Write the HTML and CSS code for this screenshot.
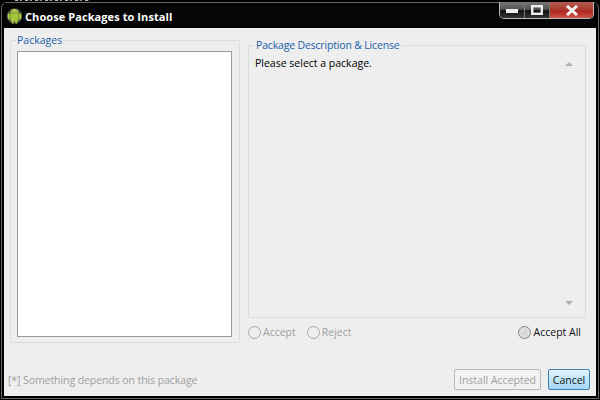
FILE: index.html
```html
<!DOCTYPE html>
<html lang="en">
<head>
<meta charset="utf-8">
<title>Choose Packages to Install</title>
<link rel="stylesheet" href="styles.css">
</head>
<body>
<div class="specks"></div>
<div class="window">
  <header class="titlebar">
    <svg class="app-icon" width="15" height="16" viewBox="0 0 16 18">
      <circle cx="8" cy="9" r="8.6" fill="#e8efd0" opacity=".3"/>
      <rect x="0.4" y="6" width="2.6" height="7" rx="1.3" fill="#a4c639"/>
      <rect x="13" y="6" width="2.6" height="7" rx="1.3" fill="#a4c639"/>
      <path d="M3.4 5.4a4.6 4.4 0 0 1 9.2 0z" fill="#b5d34a"/>
      <path d="M3.4 6h9.2v7.6a1.2 1.2 0 0 1-1.2 1.2H4.6a1.2 1.2 0 0 1-1.2-1.2z" fill="#a4c639"/>
      <rect x="4.8" y="14" width="2.4" height="3.6" rx="1.2" fill="#a4c639"/>
      <rect x="8.8" y="14" width="2.4" height="3.6" rx="1.2" fill="#a4c639"/>
      <circle cx="6" cy="3.4" r=".6" fill="#333"/>
      <circle cx="10" cy="3.4" r=".6" fill="#333"/>
    </svg>
    <h1 class="title">Choose Packages to Install</h1>
    <div class="controls">
      <div class="ctl ctl-min"><svg width="12" height="5" viewBox="0 0 12 5"><rect width="12" height="4" y="1" fill="#eee"/></svg></div>
      <div class="ctl ctl-max"><svg width="12" height="10" viewBox="0 0 12 10"><rect x="1.2" y="1.2" width="9.6" height="7.6" fill="none" stroke="#eee" stroke-width="2.4"/></svg></div>
      <div class="ctl ctl-close"><svg width="14" height="11" viewBox="0 0 14 11"><path d="M2 1l10 9M12 1L2 10" stroke="#f4f0ee" stroke-width="3" fill="none"/></svg></div>
    </div>
  </header>
  <main class="client">
    <div class="panes">
      <fieldset class="group group-left">
        <legend class="legend">Packages</legend>
        <div class="list"></div>
      </fieldset>
      <div class="right">
        <fieldset class="group group-right">
          <legend class="legend">Package Description &amp; License</legend>
          <div class="desc">
            <p class="desc-text">Please select a package.</p>
            <div class="scroll">
              <span class="arrow arrow-up"></span>
              <span class="arrow arrow-down"></span>
            </div>
          </div>
        </fieldset>
        <div class="radios">
          <label class="radio disabled"><span class="dot"></span>Accept</label>
          <label class="radio disabled"><span class="dot"></span>Reject</label>
          <label class="radio accept-all"><span class="dot"></span>Accept All</label>
        </div>
      </div>
    </div>
    <footer class="footer">
      <span class="hint">[*] Something depends on this package</span>
      <button class="btn btn-disabled" type="button">Install Accepted</button>
      <button class="btn btn-default" type="button">Cancel</button>
    </footer>
  </main>
</div>
</body>
</html>
```
FILE: styles.css
```css
* { box-sizing: border-box; }
html, body { margin: 0; padding: 0; }
body {
  width: 600px;
  height: 400px;
  background: #000;
  overflow: hidden;
  display: flex;
  flex-direction: column;
  font-family: "Open Sans", "Noto Sans", sans-serif;
  font-size: 10.5px;
}
.specks {
  height: 2px;
  flex: none;
  background: repeating-linear-gradient(90deg, #bbb 0 3px, #222 3px 5px, #999 5px 7px, #000 7px 10px) 15px 0 / 75px 1px no-repeat;
}
.window {
  height: 397px;
  flex: none;
  margin: 0 1px;
  display: flex;
  flex-direction: column;
  padding: 0 2px 2px 2px;
  border: 1px solid #666;
  border-radius: 6px 6px 0 0;
  background: #000;
}
.titlebar {
  height: 25px;
  flex: none;
  display: flex;
  align-items: flex-start;
  background: #050505;
  color: #fff;
}
.app-icon { margin: 5px 0 0 3px; flex: none; }
.title {
  margin: 6px 0 0 3px;
  font: bold 11px/15px "Open Sans", sans-serif;
  letter-spacing: 0.08px;
  white-space: nowrap;
}
.controls {
  margin: -1px 2px 0 auto;
  width: 95px;
  height: 17px;
  display: flex;
  border: 1px solid #bbb;
  border-top: 0;
  border-radius: 0 0 5px 5px;
  overflow: hidden;
}
.ctl { display: flex; align-items: center; justify-content: center; height: 100%; }
.ctl-min, .ctl-max {
  width: 25px;
  border-right: 1px solid #777;
  background: linear-gradient(#777 0, #555 45%, #111 55%, #333 100%);
}
.ctl-close {
  flex: 1;
  background: linear-gradient(#b85a50 0, #a83c30 45%, #b4281e 60%, #c8584c 100%);
}
.client {
  flex: 1;
  min-height: 0;
  background: #eeeeee;
  padding: 5px 5px 0 6px;
  display: flex;
  flex-direction: column;
}
.panes { display: flex; gap: 8px; flex: none; }
.group {
  margin: 0;
  min-width: 0;
  border: 1px solid #dcdcdc;
  border-radius: 2px;
}
.legend {
  padding: 0 1px;
  color: #1a5fa8;
  line-height: 14px;
  white-space: nowrap;
}
.group-left {
  width: 230px;
  height: 310px;
  padding: 4px 7px 0 6px;
}
.group-left .legend { margin-left: -1px; }
.list {
  height: 286px;
  background: #fff;
  border: 1px solid #9a9a9a;
}
.right { flex: 1; display: flex; flex-direction: column; min-width: 0; }
.group-right {
  height: 280px;
  padding: 0;
  margin: 5px 5px 0 0;
}
.group-right .legend { margin-left: 6px; letter-spacing: -0.17px; }
.desc { height: 265px; display: flex; }
.desc-text {
  flex: 1;
  margin: 4px 0 0 6px;
  color: #000;
  line-height: 14px;
}
.scroll {
  width: 16px;
  margin-right: 8px;
  padding: 10px 0 12px;
  display: flex;
  flex-direction: column;
  justify-content: space-between;
  align-items: center;
}
.arrow { width: 0; height: 0; border: 4px solid transparent; }
.arrow-up { border-top: 0; border-bottom: 4px solid #b0b0b0; }
.arrow-down { border-bottom: 0; border-top: 4px solid #b0b0b0; }
.radios {
  display: flex;
  align-items: center;
  gap: 11px;
  height: 14px;
  margin-top: 7px;
  padding-right: 10px;
  color: #111;
}
.radio { display: flex; align-items: center; gap: 2px; line-height: 14px; }
.radio.disabled { color: #a0a0a0; }
.dot {
  width: 13px;
  height: 13px;
  border-radius: 50%;
  border: 1px solid #808080;
  background: radial-gradient(circle, #d4d4d4 0, #e0e0e0 60%, #f2f2f2 100%);
}
.disabled .dot { border-color: #a8a8a8; background: #eee; }
.accept-all { margin-left: auto; gap: 3px; }
.footer {
  display: flex;
  align-items: center;
  gap: 7px;
  margin-top: 26px;
  padding-right: 1px;
}
.hint { flex: 1; color: #a0a0a0; margin-left: -2px; letter-spacing: -0.08px; }
.btn {
  height: 21px;
  padding: 0;
  font: inherit;
  border-radius: 2px;
}
.btn-disabled {
  width: 87px;
  color: #a0a0a0;
  background: #f2f2f2;
  border: 1px solid #b8b8b8;
}
.btn-default {
  width: 42px;
  color: #111;
  background: linear-gradient(#e4f4fc, #c0e6f8 50%, #a6d8f4);
  border: 1px solid #3c7fb1;
}
```
